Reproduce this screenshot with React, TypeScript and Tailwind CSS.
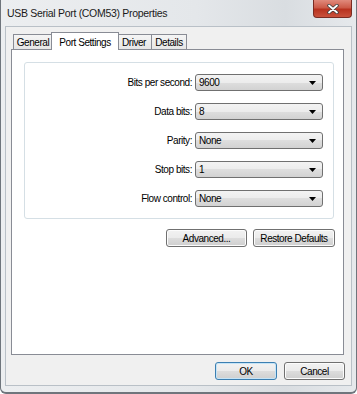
import React from 'react';

const rows: [string, string][] = [
  ['Bits per second:', '9600'],
  ['Data bits:', '8'],
  ['Parity:', 'None'],
  ['Stop bits:', '1'],
  ['Flow control:', 'None'],
];

const Combo = ({ value }: { value: string }) => (
  <div className="flex h-[17px] w-[128px] items-center justify-between rounded-[3px] border border-[#707070] bg-[linear-gradient(#f3f3f3,#ececec_50%,#dedede_50%,#d2d2d2)] pl-[3px] pr-[6px]">
    <span className="leading-none">{value}</span>
    <svg width="7" height="4" viewBox="0 0 7 4">
      <path d="M0 0h7L3.5 4z" fill="#000" />
    </svg>
  </div>
);

const Button = ({ label, w, primary }: { label: string; w: string; primary?: boolean }) => (
  <div
    className={`flex h-[18px] items-center justify-center rounded-[3px] border bg-[linear-gradient(#f2f2f2,#ebebeb_50%,#dddddd_50%,#cfcfcf)] ${w} ${
      primary ? 'border-[#3c7fb1] shadow-[inset_0_0_0_1px_#c5e4f7]' : 'border-[#707070] shadow-[inset_0_0_0_1px_#fcfcfc]'
    }`}
  >
    {label}
  </div>
);

export default function App() {
  return (
    <div className="relative flex h-[394px] w-[357px] flex-col overflow-hidden rounded-b-[6px] border-x border-b-2 border-[#6f757c] bg-[linear-gradient(90deg,#eceef0,#e4e7ea_55%,#d9dde1_80%,#e6e9ec)] font-['Liberation_Sans',Arial,sans-serif] text-[10px] tracking-[-0.45px] text-black">
      {/* Title bar */}
      <div className="flex h-[26px] shrink-0 items-center pl-[6px] pt-[2px] text-[10.5px] tracking-[-0.3px] text-[#1a1a1a]">
        USB Serial Port (COM53) Properties
      </div>

      {/* Close button */}
      <div className="absolute right-[4px] top-0 flex h-[18px] w-[39px] items-center justify-center rounded-b-[4px] border border-t-0 border-[#7a2b22] bg-[linear-gradient(#e08a7c,#cc5a48_45%,#b8321f_55%,#c9513c)]">
        <svg width="12" height="10" viewBox="0 0 12 10">
          <path d="M2 1.5l8 7M10 1.5l-8 7" stroke="#3b3b3b" strokeWidth="3.4" strokeLinecap="round" />
          <path d="M2 1.5l8 7M10 1.5l-8 7" stroke="#ffffff" strokeWidth="1.8" strokeLinecap="round" />
        </svg>
      </div>

      {/* Client area */}
      <div className="mx-[4px] flex flex-1 flex-col border border-[#b9c0c7] bg-[#f0f0f0]">
        {/* Tabs */}
        <div className="flex h-[22px] shrink-0 items-end pl-[7px]">
          <div className="flex h-[15px] w-[40px] items-center justify-center border border-b-0 border-[#898c95] bg-[linear-gradient(#f5f5f5,#e6e6e6)]">
            General
          </div>
          <div className="relative z-10 -mb-px ml-[-2px] flex h-[18px] w-[68px] items-start justify-center border border-b-0 border-[#898c95] bg-white pt-[2px]">
            Port Settings
          </div>
          <div className="ml-[-2px] flex h-[15px] w-[35px] items-center justify-center border border-b-0 border-l-0 border-[#898c95] bg-[linear-gradient(#f5f5f5,#e6e6e6)]">
            Driver
          </div>
          <div className="flex h-[15px] w-[35px] items-center justify-center border border-b-0 border-l-0 border-[#898c95] bg-[linear-gradient(#f5f5f5,#e6e6e6)]">
            Details
          </div>
        </div>

        {/* Tab panel */}
        <div className="ml-[5px] mr-[7px] flex h-[306px] flex-col border border-[#898c95] bg-white">
          <div className="ml-[12px] mr-[9px] mt-[12px] flex flex-col gap-[12px] rounded-[3px] border border-[#d5dfe5] pb-[11px] pr-[10px] pt-[11px]">
            {rows.map(([label, value]) => (
              <div key={label} className="flex items-center justify-end gap-[3px]">
                <span>{label}</span>
                <Combo value={value} />
              </div>
            ))}
          </div>
          <div className="mr-[8px] mt-[10px] flex justify-end gap-[6px]">
            <Button label="Advanced..." w="w-[81px]" />
            <Button label="Restore Defaults" w="w-[82px]" />
          </div>
        </div>

        {/* Dialog buttons */}
        <div className="mr-[6px] mt-[7px] flex justify-end gap-[7px]">
          <Button label="OK" w="w-[62px]" primary />
          <Button label="Cancel" w="w-[61px]" />
        </div>
      </div>
      <div className="h-[6px] shrink-0" />
    </div>
  );
}
